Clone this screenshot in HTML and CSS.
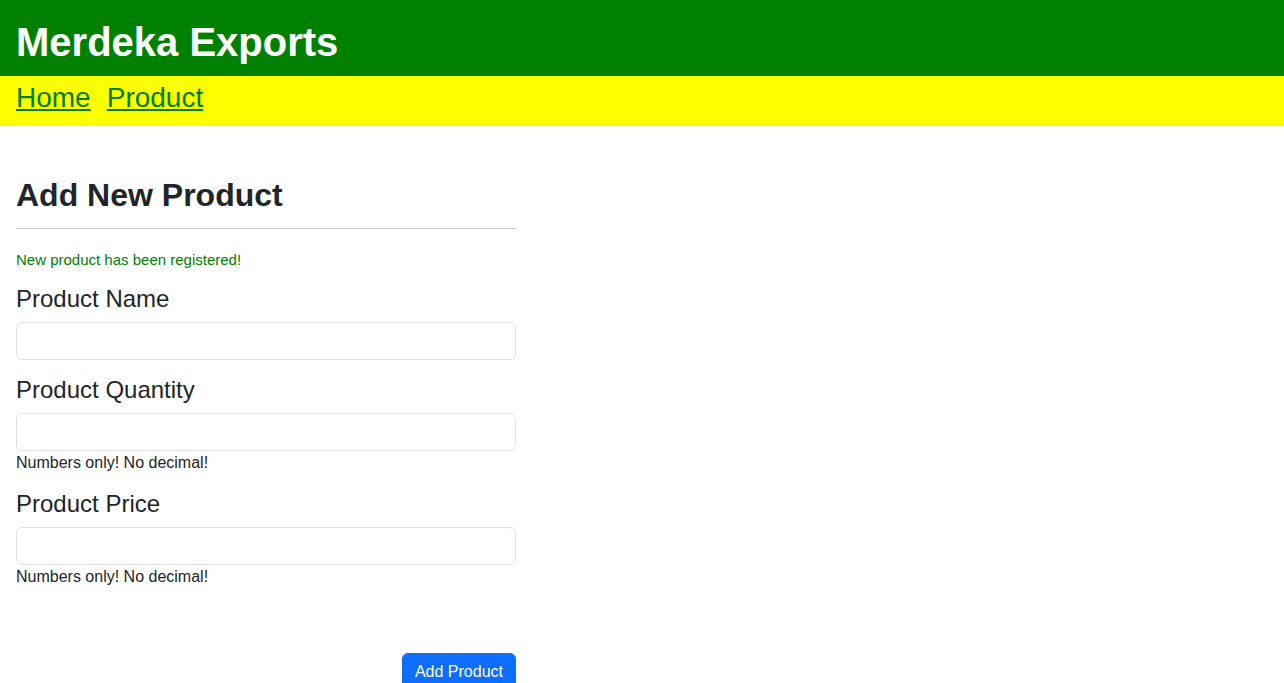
FILE: index.html
```html
<!DOCTYPE html>
<html lang="en">
<head>
<meta charset="utf-8">
<title>Merdeka Exports</title>
<link rel="stylesheet" href="styles.css">
</head>
<body>
<header class="topbar">
  <h1 class="brand">Merdeka Exports</h1>
</header>
<nav class="navbar">
  <a class="nav-link" href="#">Home</a>
  <a class="nav-link" href="#">Product</a>
</nav>
<main class="content">
  <h2 class="page-title">Add New Product</h2>
  <hr class="divider">
  <p class="success">New product has been registered!</p>
  <form class="form">
    <div class="field">
      <label class="label" for="name">Product Name</label>
      <input class="input" id="name" type="text">
    </div>
    <div class="field">
      <label class="label" for="qty">Product Quantity</label>
      <input class="input" id="qty" type="text">
      <div class="help">Numbers only! No decimal!</div>
    </div>
    <div class="field">
      <label class="label" for="price">Product Price</label>
      <input class="input" id="price" type="text">
      <div class="help">Numbers only! No decimal!</div>
    </div>
    <div class="actions">
      <button class="btn" type="button">Add Product</button>
    </div>
  </form>
</main>
</body>
</html>
```
FILE: styles.css
```css
* { box-sizing: border-box; }
html, body { margin: 0; padding: 0; }
body {
  font-family: "Liberation Sans", Arial, sans-serif;
  color: #212529;
  background: #fff;
  font-size: 16px;
  line-height: 1.5;
}
.topbar {
  background: #008000;
  height: 76px;
  padding: 8px 16px 0;
  display: flex;
  align-items: center;
}
.brand {
  margin: 0;
  color: #fff;
  font-size: 40px;
  font-weight: 700;
  line-height: 1.2;
}
.navbar {
  background: #ffff00;
  height: 50px;
  padding: 0 16px;
  display: flex;
  align-items: flex-start;
  gap: 16px;
}
.nav-link {
  color: #008000;
  font-size: 28px;
  line-height: 44px;
  text-decoration: underline;
}
.content {
  width: 532px;
  padding: 50px 16px 0;
}
.page-title {
  margin: 0;
  font-size: 32px;
  font-weight: 700;
  line-height: 38px;
}
.divider {
  margin: 14px 0 18px;
  border: 0;
  border-top: 1px solid #c8c8c8;
}
.success {
  margin: 0 0 8px;
  color: #008000;
  font-size: 15px;
  line-height: 26px;
}
.field {
  margin-bottom: 12px;
}
.label {
  display: block;
  font-size: 24px;
  line-height: 36px;
  margin-bottom: 5px;
}
.input {
  display: block;
  width: 100%;
  height: 38px;
  border: 1px solid #dee2e6;
  border-radius: 6px;
  padding: 6px 12px;
  font: inherit;
}
.help {
  font-size: 16px;
  line-height: 23px;
}
.actions {
  display: flex;
  justify-content: flex-end;
  padding-top: 53px;
}
.btn {
  background: #0d6efd;
  color: #fff;
  border: 1px solid #0d6efd;
  border-radius: 6px;
  font: inherit;
  font-size: 16px;
  padding: 6px 12px;
}
```
